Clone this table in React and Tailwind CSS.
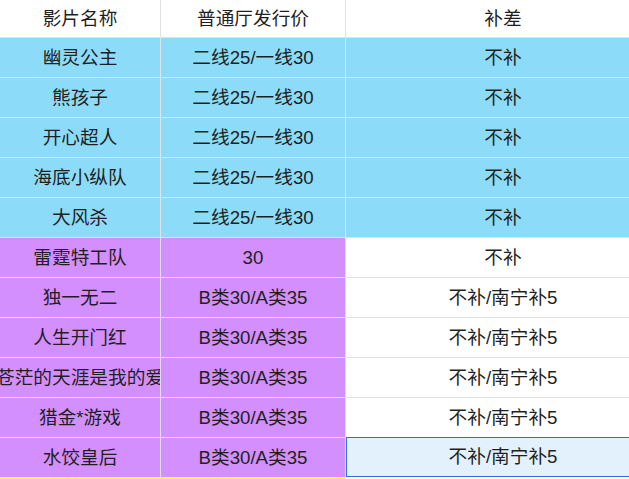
const blue = [
  ['幽灵公主', '二线25/一线30', '不补'],
  ['熊孩子', '二线25/一线30', '不补'],
  ['开心超人', '二线25/一线30', '不补'],
  ['海底小纵队', '二线25/一线30', '不补'],
  ['大风杀', '二线25/一线30', '不补'],
];

const purple = [
  ['雷霆特工队', '30', '不补'],
  ['独一无二', 'B类30/A类35', '不补/南宁补5'],
  ['人生开门红', 'B类30/A类35', '不补/南宁补5'],
  ['苍茫的天涯是我的爱', 'B类30/A类35', '不补/南宁补5'],
  ['猎金*游戏', 'B类30/A类35', '不补/南宁补5'],
];

const cell = 'flex items-center justify-center overflow-hidden whitespace-nowrap border-r border-b';

const App = () => {
  return (
    <div
      className="w-[629px] h-[479px] overflow-hidden bg-white text-[18.67px] text-[#1f1f1f]"
      style={{ fontFamily: '"Liberation Sans", "Noto Sans CJK SC", sans-serif' }}
    >
      <div className="w-[660px] grid grid-cols-[161px_185px_1fr]">
        {/* header */}
        <div className={`${cell} h-[38px] border-[#e2e2e2]`}>影片名称</div>
        <div className={`${cell} h-[38px] border-[#e2e2e2]`}>普通厅发行价</div>
        <div className={`${cell} h-[38px] border-[#e2e2e2] border-r-0`}>补差</div>

        {blue.map((r) => (
          <>
            <div key={r[0] + 'a'} className={`${cell} h-[40px] bg-[#8cdcf9] border-[#dfe3e6]`}>{r[0]}</div>
            <div key={r[0] + 'b'} className={`${cell} h-[40px] bg-[#8cdcf9] border-[#dfe3e6]`}>{r[1]}</div>
            <div key={r[0] + 'c'} className={`${cell} h-[40px] bg-[#8cdcf9] border-[#dfe3e6] border-r-0`}>{r[2]}</div>
          </>
        ))}

        {purple.map((r) => (
          <>
            <div key={r[0] + 'a'} className={`${cell} h-[40px] bg-[#d48ffe] border-[#e3dde8]`}>{r[0]}</div>
            <div key={r[0] + 'b'} className={`${cell} h-[40px] bg-[#d48ffe] border-[#e3dde8]`}>{r[1]}</div>
            <div key={r[0] + 'c'} className={`${cell} h-[40px] bg-white border-[#e2e2e2] border-r-0`}>{r[2]}</div>
          </>
        ))}

        {/* last row */}
        <div className={`${cell} h-[41px] bg-[#d48ffe] border-[#e3dde8] border-b-2 border-b-[#fff23a]`}>水饺皇后</div>
        <div className={`${cell} h-[41px] bg-[#d48ffe] border-[#e3dde8] border-b-2 border-b-[#fff23a]`}>B类30/A类35</div>
        <div className="relative -mt-px h-[40px] flex items-center justify-center whitespace-nowrap bg-[#e3f1fd]">
          不补/南宁补5
          <div className="absolute inset-0 border-[1.5px] border-[#2a6fe0]"></div>
        </div>
      </div>
    </div>
  );
};

export default App;
